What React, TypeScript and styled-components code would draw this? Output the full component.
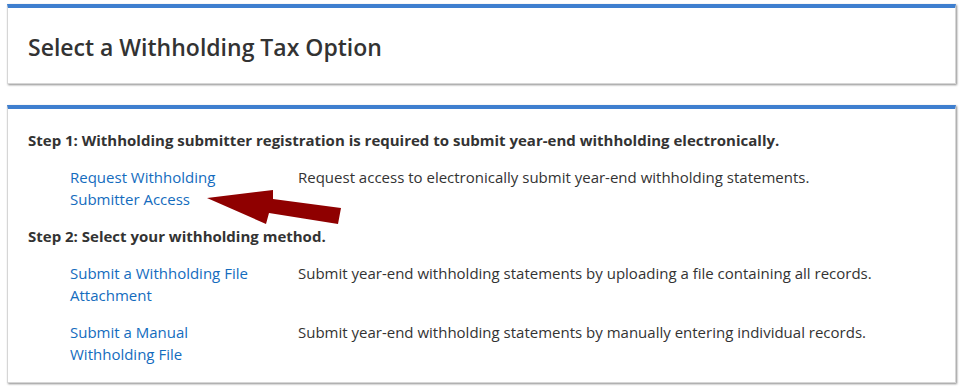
import React from 'react';
import styled, { createGlobalStyle } from 'styled-components';

const GlobalStyle = createGlobalStyle`
  body {
    margin: 0;
    background: #fff;
    font-family: 'Open Sans', 'Noto Sans', sans-serif;
    color: #333;
  }
`;

const Page = styled.div`
  display: flex;
  flex-direction: column;
  gap: 21px;
  padding: 4px 7px;
`;

const Card = styled.section`
  position: relative;
  background: #fff;
  border: 1px solid #d6d6d6;
  border-top: 4px solid #3f7fcf;
  box-shadow: 1px 1px 2px rgba(0, 0, 0, 0.45);
`;

const TitleCard = styled(Card)`
  padding: 25px 20px 21px;
`;

const Title = styled.h1`
  margin: 0;
  font-size: 23px;
  line-height: 29px;
  font-weight: 600;
  color: #333;
`;

const BodyCard = styled(Card)`
  display: flex;
  flex-direction: column;
  gap: 15px;
  padding: 20px 20px 17px;
`;

const StepText = styled.p`
  margin: 0;
  font-size: 15px;
  line-height: 22px;
  font-weight: 700;
`;

const OptionRow = styled.div`
  display: grid;
  grid-template-columns: 190px 1fr;
  column-gap: 38px;
  padding-left: 42px;
  font-size: 15px;
  line-height: 22px;
`;

const OptionLink = styled.a`
  color: #146cbe;
  text-decoration: none;
  cursor: pointer;
`;

const OptionText = styled.span`
  color: #333;
`;

// red arrow pointing at the registration link
const Pointer = styled.svg`
  position: absolute;
  left: 198px;
  top: 80px;
`;

const options = [
  {
    link: 'Submit a Withholding File Attachment',
    text: 'Submit year-end withholding statements by uploading a file containing all records.',
  },
  {
    link: 'Submit a Manual Withholding File',
    text: 'Submit year-end withholding statements by manually entering individual records.',
  },
];

const App: React.FC = () => {
  return (
    <>
      <GlobalStyle />
      <Page>
        <TitleCard>
          <Title>Select a Withholding Tax Option</Title>
        </TitleCard>
        <BodyCard>
          <StepText>
            Step 1: Withholding submitter registration is required to submit year-end withholding
            electronically.
          </StepText>
          <OptionRow>
            <OptionLink>Request Withholding Submitter Access</OptionLink>
            <OptionText>
              Request access to electronically submit year-end withholding statements.
            </OptionText>
          </OptionRow>
          <StepText>Step 2: Select your withholding method.</StepText>
          {options.map((o) => (
            <OptionRow key={o.link}>
              <OptionLink>{o.link}</OptionLink>
              <OptionText>{o.text}</OptionText>
            </OptionRow>
          ))}
          <Pointer width='137' height='37' viewBox='0 0 137 37'>
            <polygon
              points='1,9 67,1 67,10 135,19 132,35 63,24 60,35'
              fill='#8f0000'
            />
          </Pointer>
        </BodyCard>
      </Page>
    </>
  );
};

export default App;
